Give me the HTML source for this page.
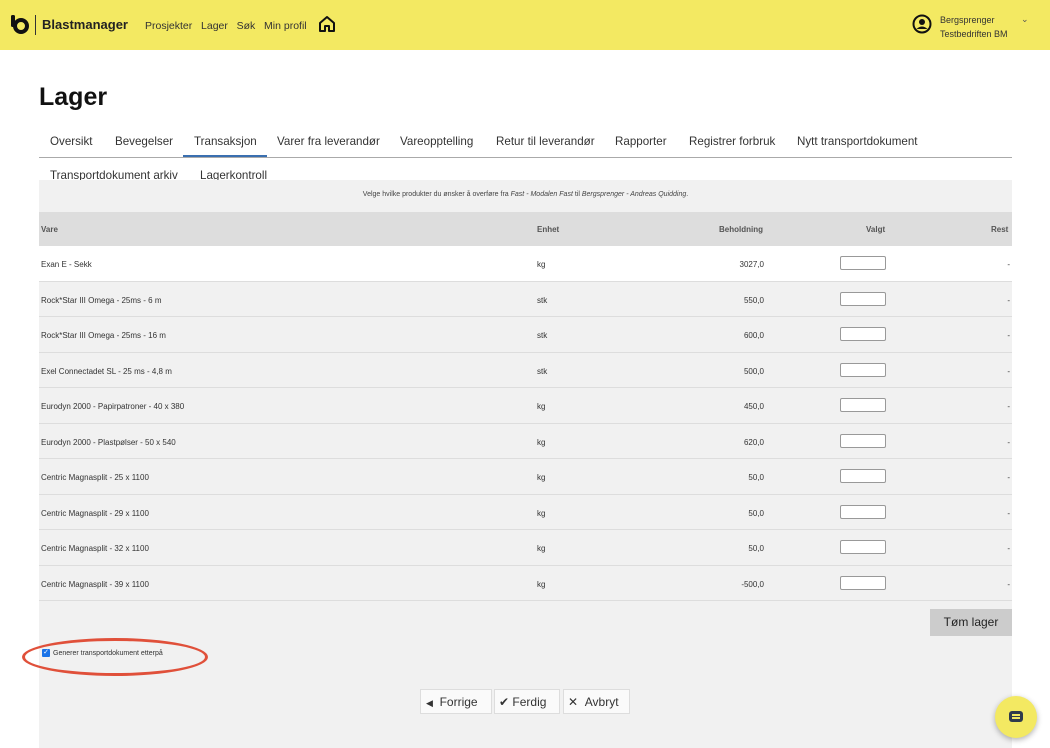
<!DOCTYPE html><html><head><meta charset="utf-8"><style>
*{box-sizing:border-box;margin:0;padding:0}
body{width:1050px;height:748px;overflow:hidden;background:#fff;font-family:"Liberation Sans",sans-serif;color:#222;position:relative}
.hdr{position:absolute;left:0;top:0;width:1050px;height:50px;background:#f3e962}
.abs{position:absolute;white-space:nowrap}
.tabs .abs{font-size:11.6px;color:#333;top:135px}
.box{position:absolute;left:39px;top:180px;width:973px;height:568px;background:#f1f1f1}
.row{position:absolute;left:0;width:973px;height:35.5px;border-bottom:1px solid #ddd;font-size:8px;color:#333}
.row span{position:absolute;top:14px}
.inp{position:absolute;left:801px;top:10px;width:46px;height:14px;background:#fff;border:1px solid #999;border-radius:2px}
.btn{position:absolute;top:689px;height:25px;background:#fafafa;border:1px solid #ddd;font-size:12px;color:#333;line-height:24px}
</style></head><body>
<div class="hdr">
<svg class="abs" style="left:10px;top:14px" width="20" height="20" viewBox="0 0 20 20"><rect x="1" y="1" width="4" height="12" rx="1.5" fill="#111"/><circle cx="11" cy="12" r="6" fill="none" stroke="#111" stroke-width="4"/></svg>
<div class="abs" style="left:35px;top:15px;width:1px;height:20px;background:#333"></div>
<div class="abs" style="left:42px;top:17px;font-size:13px;font-weight:bold;color:#222">Blastmanager</div>
<div class="abs" style="left:145px;top:20px;font-size:10.5px;color:#333">Prosjekter&nbsp;&nbsp;&nbsp;Lager&nbsp;&nbsp;&nbsp;Søk&nbsp;&nbsp;&nbsp;Min profil</div>
<svg class="abs" style="left:318px;top:15px" width="18" height="18" viewBox="0 0 18 18"><path d="M2 8 L9 2 L16 8 V16 H11 V11 H7 V16 H2 Z" fill="none" stroke="#111" stroke-width="2" stroke-linejoin="round"/></svg>
<svg class="abs" style="left:912px;top:14px" width="20" height="20" viewBox="0 0 20 20"><circle cx="10" cy="10" r="8.5" fill="none" stroke="#111" stroke-width="2"/><circle cx="10" cy="8" r="3" fill="#111"/><path d="M4.5 15 Q10 10 15.5 15" fill="#111"/></svg>
<div class="abs" style="left:940px;top:13px;font-size:9px;color:#333;line-height:14px">Bergsprenger<br>Testbedriften BM</div>
<div class="abs" style="left:1021px;top:14px;font-size:9px;color:#555">⌄</div>
</div>
<div class="abs" style="left:39px;top:83px;font-size:25px;font-weight:bold;color:#111">Lager</div>
<div class="tabs">
<div class="abs" style="left:50px">Oversikt</div><div class="abs" style="left:115px">Bevegelser</div><div class="abs" style="left:194px">Transaksjon</div><div class="abs" style="left:277px">Varer fra leverandør</div><div class="abs" style="left:400px">Vareopptelling</div><div class="abs" style="left:496px">Retur til leverandør</div><div class="abs" style="left:615px">Rapporter</div><div class="abs" style="left:689px">Registrer forbruk</div><div class="abs" style="left:797px">Nytt transportdokument</div>
<div class="abs" style="left:50px;top:169px">Transportdokument arkiv</div><div class="abs" style="left:200px;top:169px">Lagerkontroll</div>
</div>
<div class="abs" style="left:39px;top:157px;width:973px;height:1px;background:#aaa"></div>
<div class="abs" style="left:183px;top:155px;width:84px;height:2px;background:#3a6fb0"></div>
<div class="box">
<div class="abs" style="left:0;top:11px;width:973px;text-align:center;font-size:7px;color:#444">Velge hvilke produkter du ønsker å overføre fra <i>Fast - Modalen Fast</i> til <i>Bergsprenger - Andreas Quidding</i>.</div>
<div class="abs" style="left:0;top:32px;width:973px;height:34px;background:#ddd;font-size:8px;color:#555;font-weight:bold">
<span class="abs" style="left:2px;top:13px">Vare</span><span class="abs" style="left:498px;top:13px">Enhet</span><span class="abs" style="left:680px;top:13px">Beholdning</span><span class="abs" style="left:827px;top:13px">Valgt</span><span class="abs" style="left:952px;top:13px">Rest</span></div>
<div class="row" style="top:66px;background:#fff"><span style="left:2px">Exan E - Sekk</span><span style="left:498px">kg</span><span style="right:248px">3027,0</span><div class="inp"></div><span style="right:2px">-</span></div>
<div class="row" style="top:101.5px"><span style="left:2px">Rock*Star III Omega - 25ms - 6 m</span><span style="left:498px">stk</span><span style="right:248px">550,0</span><div class="inp"></div><span style="right:2px">-</span></div>
<div class="row" style="top:137px"><span style="left:2px">Rock*Star III Omega - 25ms - 16 m</span><span style="left:498px">stk</span><span style="right:248px">600,0</span><div class="inp"></div><span style="right:2px">-</span></div>
<div class="row" style="top:172.5px"><span style="left:2px">Exel Connectadet SL - 25 ms - 4,8 m</span><span style="left:498px">stk</span><span style="right:248px">500,0</span><div class="inp"></div><span style="right:2px">-</span></div>
<div class="row" style="top:208px"><span style="left:2px">Eurodyn 2000 - Papirpatroner - 40 x 380</span><span style="left:498px">kg</span><span style="right:248px">450,0</span><div class="inp"></div><span style="right:2px">-</span></div>
<div class="row" style="top:243.5px"><span style="left:2px">Eurodyn 2000 - Plastpølser - 50 x 540</span><span style="left:498px">kg</span><span style="right:248px">620,0</span><div class="inp"></div><span style="right:2px">-</span></div>
<div class="row" style="top:279px"><span style="left:2px">Centric Magnasplit - 25 x 1100</span><span style="left:498px">kg</span><span style="right:248px">50,0</span><div class="inp"></div><span style="right:2px">-</span></div>
<div class="row" style="top:314.5px"><span style="left:2px">Centric Magnasplit - 29 x 1100</span><span style="left:498px">kg</span><span style="right:248px">50,0</span><div class="inp"></div><span style="right:2px">-</span></div>
<div class="row" style="top:350px"><span style="left:2px">Centric Magnasplit - 32 x 1100</span><span style="left:498px">kg</span><span style="right:248px">50,0</span><div class="inp"></div><span style="right:2px">-</span></div>
<div class="row" style="top:385.5px"><span style="left:2px">Centric Magnasplit - 39 x 1100</span><span style="left:498px">kg</span><span style="right:248px">-500,0</span><div class="inp"></div><span style="right:2px">-</span></div>
<div class="abs" style="left:891px;top:429px;width:82px;height:27px;background:#ccc;font-size:12px;color:#222;text-align:center;line-height:27px">Tøm lager</div>
</div>
<div class="abs" style="left:22px;top:638px;width:186px;height:38px;border:3px solid #e0503a;border-radius:50%"></div>
<div class="abs" style="left:42px;top:649px;width:8px;height:8px;background:#1a73e8;border-radius:1px;color:#fff;font-size:7px;line-height:8px;text-align:center">✓</div>
<div class="abs" style="left:53px;top:650px;font-size:7px;color:#333">Generer transportdokument etterpå</div>
<div class="btn" style="left:420px;width:72px"><span style="margin-left:5px;font-size:9px">◀</span>&nbsp;&nbsp;Forrige</div>
<div class="btn" style="left:494px;width:66px"><span style="margin-left:4px">✔</span>&nbsp;Ferdig</div>
<div class="btn" style="left:563px;width:67px"><span style="margin-left:4px">✕</span>&nbsp;&nbsp;Avbryt</div>
<div class="abs" style="left:995px;top:696px;width:42px;height:42px;border-radius:50%;background:#f3e962;box-shadow:0 2px 6px rgba(0,0,0,.3)"><div class="abs" style="left:14px;top:15px;width:14px;height:11px;background:#2f3b4c;border-radius:3px"></div><div class="abs" style="left:17px;top:18px;width:8px;height:1.5px;background:#f3e962"></div><div class="abs" style="left:17px;top:21px;width:8px;height:1.5px;background:#f3e962"></div></div>
</body></html>
